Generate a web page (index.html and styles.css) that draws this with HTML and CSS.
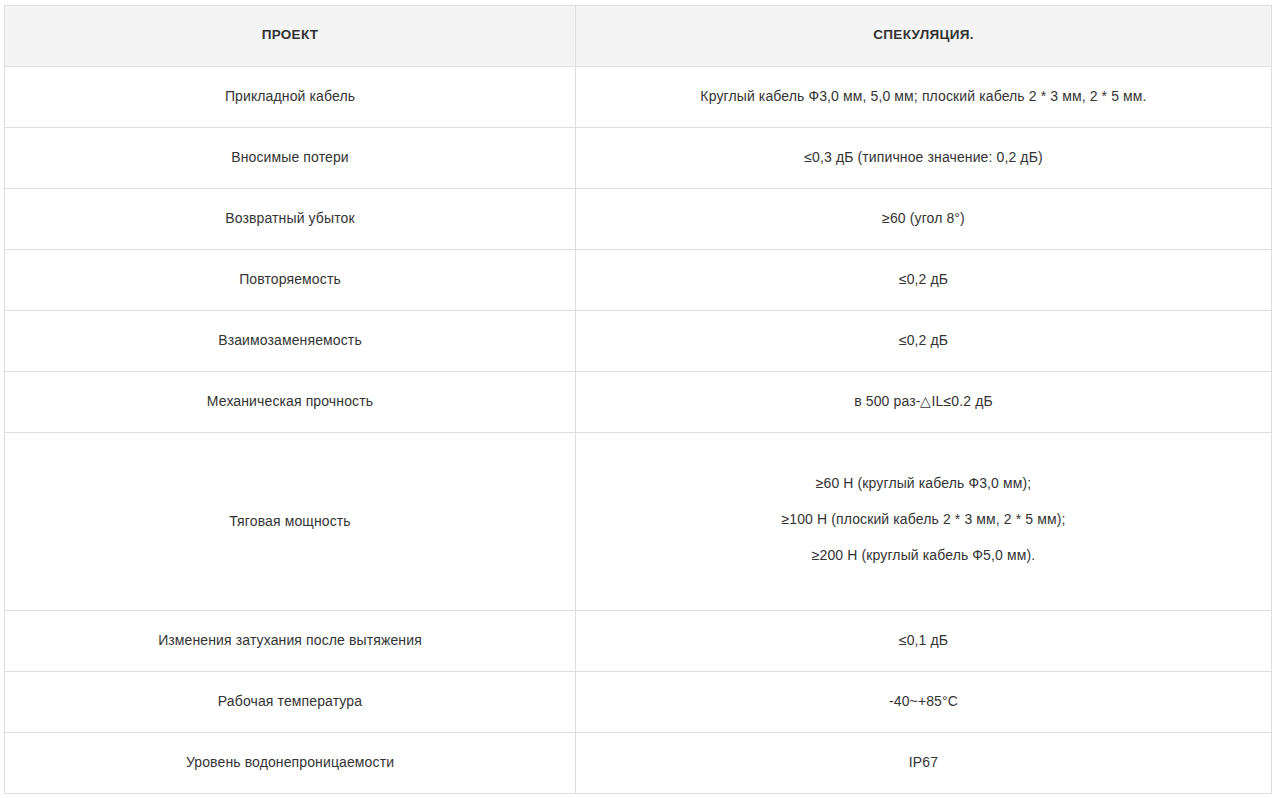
FILE: index.html
```html
<!DOCTYPE html>
<html lang="ru">
<head>
<meta charset="utf-8">
<link rel="stylesheet" href="styles.css">
</head>
<body>
<div class="wrap">
<table class="spec">
  <colgroup><col class="c1"><col class="c2"></colgroup>
  <thead>
    <tr><th>ПРОЕКТ</th><th>СПЕКУЛЯЦИЯ.</th></tr>
  </thead>
  <tbody>
    <tr><td>Прикладной кабель</td><td>Круглый кабель Ф3,0 мм, 5,0 мм; плоский кабель 2 * 3 мм, 2 * 5 мм.</td></tr>
    <tr><td>Вносимые потери</td><td>≤0,3 дБ (типичное значение: 0,2 дБ)</td></tr>
    <tr><td>Возвратный убыток</td><td>≥60 (угол 8°)</td></tr>
    <tr><td>Повторяемость</td><td>≤0,2 дБ</td></tr>
    <tr><td>Взаимозаменяемость</td><td>≤0,2 дБ</td></tr>
    <tr><td>Механическая прочность</td><td>в 500 раз-△IL≤0.2 дБ</td></tr>
    <tr class="tall"><td>Тяговая мощность</td><td class="multi"><div>≥60 Н (круглый кабель Ф3,0 мм);</div><div>≥100 Н (плоский кабель 2 * 3 мм, 2 * 5 мм);</div><div>≥200 Н (круглый кабель Ф5,0 мм).</div></td></tr>
    <tr><td>Изменения затухания после вытяжения</td><td>≤0,1 дБ</td></tr>
    <tr><td>Рабочая температура</td><td>-40~+85°C</td></tr>
    <tr><td>Уровень водонепроницаемости</td><td>IP67</td></tr>
  </tbody>
</table>
</div>
</body>
</html>
```
FILE: styles.css
```css
html, body {
  margin: 0;
  padding: 0;
  background: #fff;
}
.wrap {
  padding: 5px 4px 0 4px;
}
.spec {
  width: 1268px;
  border-collapse: collapse;
  table-layout: fixed;
  font-family: "Liberation Sans", Arial, sans-serif;
  font-size: 14px;
  letter-spacing: 0.12px;
  color: #333;
}
.c1 { width: 571px; }
.spec th, .spec td {
  border: 1px solid #dedede;
  text-align: center;
  vertical-align: middle;
  line-height: 20px;
  padding: 19px 10px 21px;
}
.spec th {
  background: #f4f4f4;
  font-weight: bold;
  font-size: 13.5px;
  letter-spacing: 0.3px;
  color: #333;
}
.spec td.multi {
  padding: 32px 10px 37px;
  line-height: 36px;
}
```
